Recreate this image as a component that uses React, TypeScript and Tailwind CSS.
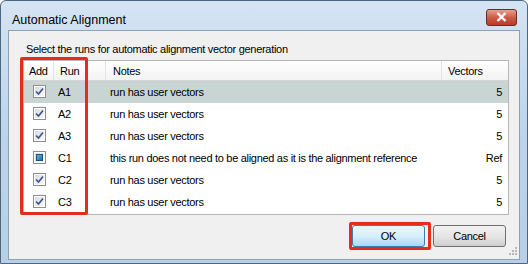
import React from "react";

type Run = {
  id: string;
  notes: string;
  vectors: string;
  state: "checked" | "mixed";
};

const runs: Run[] = [
  { id: "A1", notes: "run has user vectors", vectors: "5", state: "checked" },
  { id: "A2", notes: "run has user vectors", vectors: "5", state: "checked" },
  { id: "A3", notes: "run has user vectors", vectors: "5", state: "checked" },
  {
    id: "C1",
    notes: "this run does not need to be aligned as it is the alignment reference",
    vectors: "Ref",
    state: "mixed",
  },
  { id: "C2", notes: "run has user vectors", vectors: "5", state: "checked" },
  { id: "C3", notes: "run has user vectors", vectors: "5", state: "checked" },
];

const CheckBox = ({ state }: { state: Run["state"] }) => (
  <div className="w-[13px] h-[13px] border border-[#8f8f8f] bg-white p-[1px]">
    <div className="w-full h-full bg-gradient-to-br from-[#dcdcdc] to-[#f8f8f8] flex items-center justify-center">
      {state === "checked" ? (
        <svg width="9" height="9" viewBox="0 0 9 9">
          <path
            d="M1 4.5 L3.5 7 L8 1.5"
            fill="none"
            stroke="#3c5596"
            strokeWidth="1.7"
          />
        </svg>
      ) : (
        <div className="w-[7px] h-[7px] border border-[#1c5180] bg-gradient-to-br from-[#6ab4e4] to-[#1d6fa8]" />
      )}
    </div>
  </div>
);

const RunRow = ({ run, selected }: { run: Run; selected: boolean }) => (
  <div
    className={`flex h-[22px] items-center ${
      selected ? "bg-[#c9d5d2]" : "bg-white"
    }`}
  >
    <div className="w-[30px] flex justify-center">
      <CheckBox state={run.state} />
    </div>
    <div className="w-[52px] pl-[4px]">{run.id}</div>
    <div className="w-[336px] pl-[4px] whitespace-nowrap">{run.notes}</div>
    <div className="flex-1 text-right pr-[6px]">{run.vectors}</div>
  </div>
);

const App = () => {
  return (
    <div
      className="relative w-[528px] h-[264px] flex flex-col bg-gradient-to-b from-[#d5e4f3] via-[#bfd4ea] to-[#b9cfe6] border border-[#4e6781] rounded-t-[6px] text-[#000] tracking-[-0.3px]"
      style={{ fontFamily: '"Liberation Sans", Arial, sans-serif' }}
    >
      <div className="h-[29px] flex items-center justify-between pl-[11px] pr-[10px]">
        <span className="text-[12.5px] tracking-normal mt-[10px]">
          Automatic Alignment
        </span>
        <button className="w-[31px] h-[17px] mt-[4px] rounded-[3px] border border-[#6d2b22] bg-gradient-to-b from-[#e4a08f] via-[#cc5c48] to-[#b93a28] flex items-center justify-center">
          <svg width="11" height="10" viewBox="0 0 11 10">
            <path
              d="M1.5 1 L9.5 9 M9.5 1 L1.5 9"
              stroke="#fff"
              strokeWidth="2.4"
            />
          </svg>
        </button>
      </div>

      <div className="flex-1 mx-[7px] mb-[7px] border border-[#8aa3bd] bg-[#f0f0f0] flex flex-col text-[11px]">
        <div className="pl-[17px] pt-[11px] leading-[15px]">
          Select the runs for automatic alignment vector generation
        </div>

        <div className="ml-[14px] mr-[10px] mt-[3px] h-[155px] border border-[#b4b8bc] bg-white flex flex-col">
          <div className="h-[20px] flex border-b border-[#d5d5d5] bg-gradient-to-b from-white to-[#f3f3f3]">
            <div className="w-[30px] h-full flex items-center pt-[1px] pl-[5px] border-r border-[#e3e3e3]">
              Add
            </div>
            <div className="w-[52px] h-full flex items-center pt-[1px] pl-[6px] border-r border-[#e3e3e3]">
              Run
            </div>
            <div className="w-[336px] h-full flex items-center pt-[1px] pl-[7px] border-r border-[#e3e3e3]">
              Notes
            </div>
            <div className="flex-1 h-full flex items-center pt-[1px] pl-[6px]">
              Vectors
            </div>
          </div>
          {runs.map((run, i) => (
            <RunRow key={run.id} run={run} selected={i === 0} />
          ))}
        </div>

        <div className="flex justify-end gap-[8px] mt-[10px] pr-[13px]">
          <button className="w-[73px] h-[22px] rounded-[3px] border border-[#3c7fb1] bg-gradient-to-b from-[#eaf6fd] via-[#d9f0fc] to-[#a7d9f5] text-[11px]">
            OK
          </button>
          <button className="w-[73px] h-[22px] rounded-[3px] border border-[#707070] bg-gradient-to-b from-[#f2f2f2] via-[#e6e6e6] to-[#cfcfcf] text-[11px]">
            Cancel
          </button>
        </div>
        <div className="flex-1 flex justify-end items-end pr-[2px] pb-[2px]">
          <svg width="10" height="10" viewBox="0 0 10 10">
            <g fill="#b4b9be">
              <rect x="8" y="0" width="2" height="2" />
              <rect x="5" y="3" width="2" height="2" />
              <rect x="8" y="3" width="2" height="2" />
              <rect x="2" y="6" width="2" height="2" />
              <rect x="5" y="6" width="2" height="2" />
              <rect x="8" y="6" width="2" height="2" />
            </g>
          </svg>
        </div>
      </div>

      {/* annotation boxes */}
      <div className="absolute left-[19px] top-[56px] w-[68px] h-[158px] border-[3px] border-[#e42d1f] rounded-[2px]" />
      <div className="absolute left-[348px] top-[221px] w-[82px] h-[28px] border-[3px] border-[#e42d1f] rounded-[2px]" />
    </div>
  );
};

export default App;
